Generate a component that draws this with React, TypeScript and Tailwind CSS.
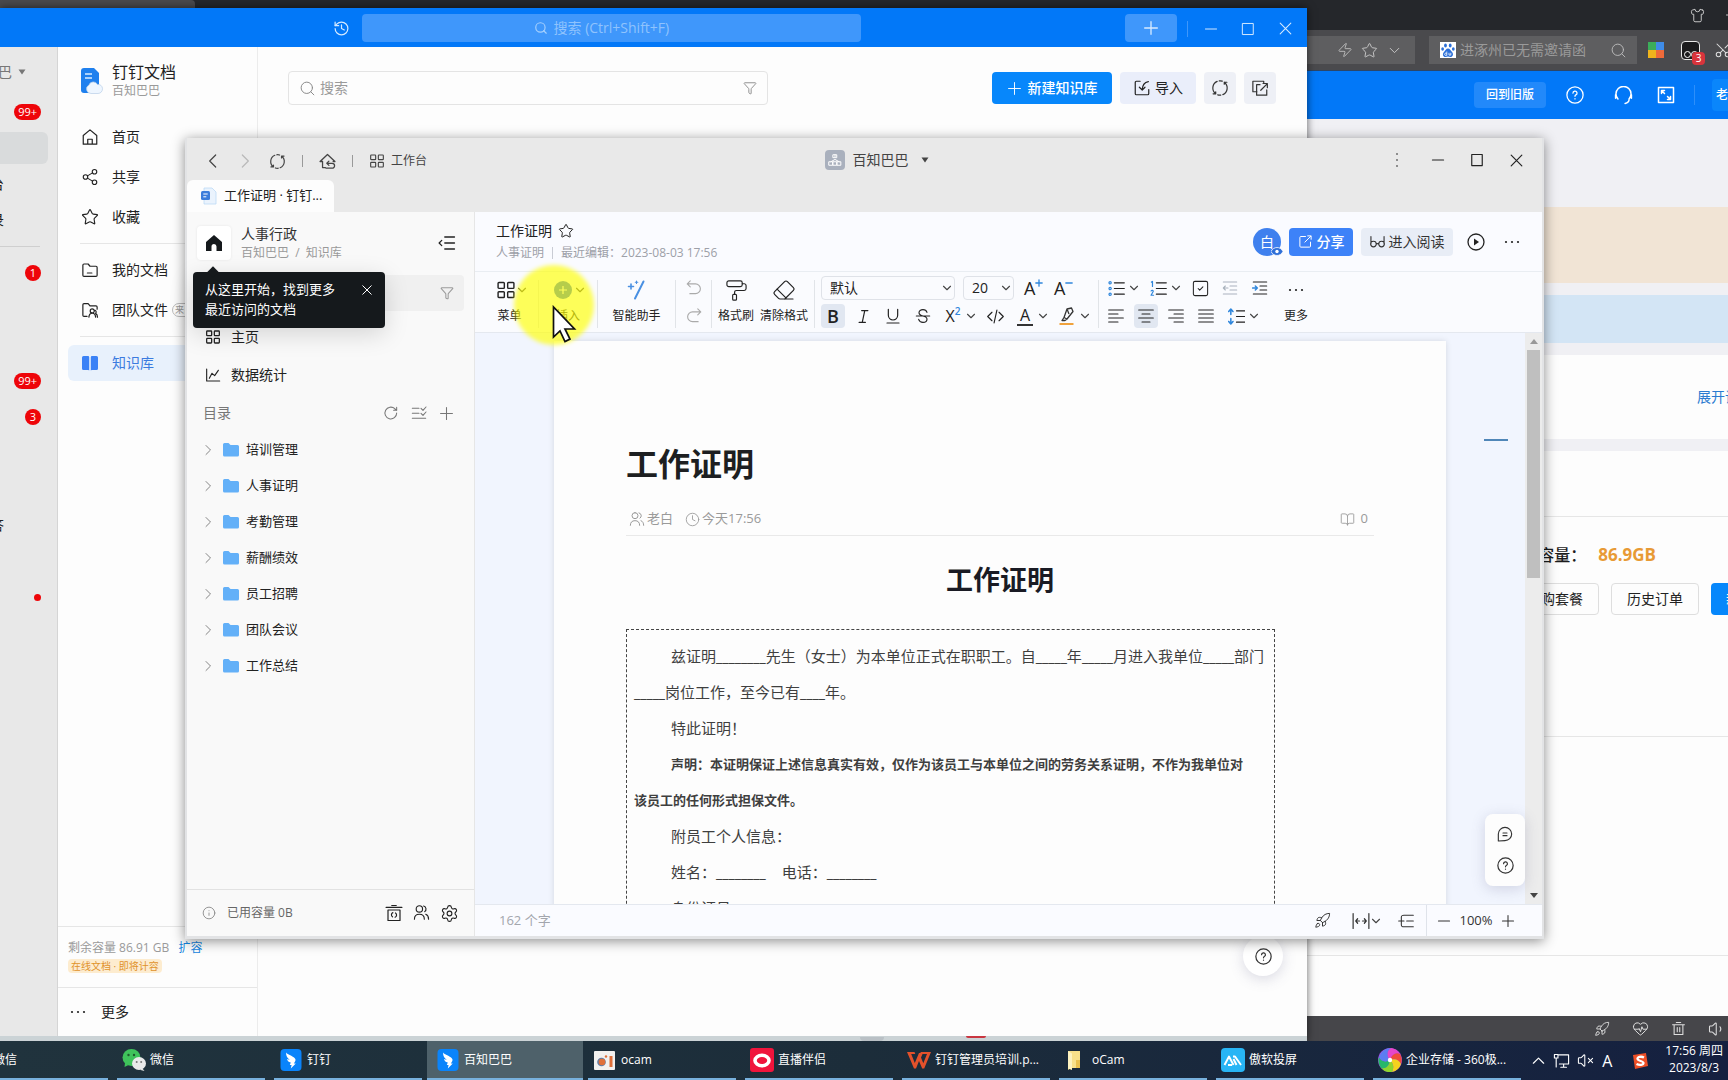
import React from "react";
import {
  Share2, Star, Search, Funnel, ChevronDown, History, Info, Rocket, Scissors, Shirt,
  HeartPulse, Clock, BookOpen, Zap, Settings, SquareCheck, Eraser, PaintRoller, VolumeX, Volume1,
} from "lucide-react";

type IconProps = {
  d: string;
  size?: number;
  w?: number;
  className?: string;
  children?: React.ReactNode;
};

function Icon({ d, size = 18, w = 1.6, className = "", children }: IconProps) {
  return (
    <svg
      width={size}
      height={size}
      viewBox="0 0 24 24"
      fill="none"
      stroke="currentColor"
      strokeWidth={w}
      strokeLinecap="round"
      strokeLinejoin="round"
      className={"shrink-0 " + className}
      aria-hidden="true"
    >
      <path d={d} />
      {children}
    </svg>
  );
}

const P = {
  plus: "M12 2.500v19M2.500 12h19",
  minus: "M2.500 12h19",
  square: "M3 2.500h18v19H3z",
  close: "M3.500 3.500l17 17M20.500 3.500l-17 17",
  left: "M16 3 7 12l9 9",
  right: "M8 3l9 9-9 9",
  up: "M2.500 17 12 7.500l9.500 9.500",
  undo: "M7 2.500 3 6.500l4 4M3 6.500h11a6.500 6.500 0 0 1 0 13H6.500",
  redo: "M17 2.500l4 4-4 4M21 6.500H10a6.500 6.500 0 0 0 0 13h7.500",
  code: "M7 6l-6 6 6 6M17 6l6 6-6 6M14 3l-4 18",
  trash: "M2.500 6h19M8.500 2.500h7M5 6v15.500h14V6M10 10.500v6.500M14 10.500v6.500",
  users: "M9 2.500a4.500 4.500 0 1 1 0 9 4.500 4.500 0 0 1 0-9zM2 21.500c0-4.500 2.500-7 7-7s7 2.500 7 7M15 2.800a4.500 4.500 0 0 1 1.500 8M18 14.500c2.500 1 4 3.500 4 7",
  refresh: "M8.200 3.200A9.600 9.600 0 0 0 6.300 19.700M6.300 19.700H2.800M6.300 19.700v-2.700M15.800 20.800A9.600 9.600 0 0 0 17.700 4.300M17.700 4.300h3.500M17.700 4.300V7M11 2.500c2-.2 3 0 4 .4M13 21.500c-2 .2-3 0-4-.4",
  reload: "M20.500 12a8.800 8.800 0 1 1-2.800-6.400L20.500 8M20.500 3.600V8h-4.600",
  grid: "M3.500 3h5.500a1 1 0 0 1 1 1v5a1 1 0 0 1-1 1H3.500a1 1 0 0 1-1-1V4a1 1 0 0 1 1-1zM15 3h5.500a1 1 0 0 1 1 1v5a1 1 0 0 1-1 1H15a1 1 0 0 1-1-1V4a1 1 0 0 1 1-1zM3.500 14H9a1 1 0 0 1 1 1v5a1 1 0 0 1-1 1H3.500a1 1 0 0 1-1-1v-5a1 1 0 0 1 1-1zM15 14h5.500a1 1 0 0 1 1 1v5a1 1 0 0 1-1 1H15a1 1 0 0 1-1-1v-5a1 1 0 0 1 1-1z",
  homeBack: "M9 20.500H5V12H1.500L12 2 22.500 12H20M11 14.500h7.500a3.500 3.500 0 0 1 0 7H10M11 14.500l3-3M11 14.500l3 3",
  collapse: "M9 4h13M9 12h13M9 20h13M5 8.500 1.500 12 5 15.500",
  question: "M9.300 9.500a2.700 2.700 0 1 1 3.900 2.400c-.8.4-1.200.9-1.200 1.900M12 17v.3",
  folderMinus: "M2.500 19V5.500a1.500 1.500 0 0 1 1.500-1.500h5.500l2.500 3H20a1.500 1.500 0 0 1 1.500 1.500V19a1.500 1.500 0 0 1-1.500 1.500H4A1.500 1.500 0 0 1 2.500 19zM8.500 16h6",
  folderUser: "M8 20.500H4A1.500 1.500 0 0 1 2.500 19V5A1.500 1.500 0 0 1 4 3.500h5.500l2.500 3H20A1.500 1.500 0 0 1 21.500 8v3M15 10.500a2.700 2.700 0 1 1 0 5.400 2.700 2.700 0 0 1 0-5.400zM10.500 21.500c.3-3.500 2-5.200 4.500-5.200s4.200 1.700 4.500 5.200M19 12.500c1.500 1 1.500 3 .5 4 1.500.8 2.500 2.500 2.500 5",
  importIn: "M9.500 3H4.500A1.500 1.500 0 0 0 3 4.500v15A1.500 1.500 0 0 0 4.500 21h15a1.500 1.500 0 0 0 1.500-1.500V14M20.500 3.500C15 4.500 12.500 8 12.300 14.500M8.500 11l3.800 3.700 3.700-3.700",
  copyOut: "M8 17H2.500V3H17V5M12 7.500H7.500V21.500H21v-7M13 15l8.500-8.500M16 6h5.800v5.500",
  share: "M12 4H4.500A1.500 1.500 0 0 0 3 5.500v14A1.500 1.500 0 0 0 4.500 21h14a1.500 1.500 0 0 0 1.500-1.500V13M11 13l9.500-9.500M15.500 3H21v5.500",
  chart: "M2.500 3v18H22M6.500 17l4-7.500 4 3.500 5.500-8",
  listCheck: "M2 5h10M2 12.500h10M2 20h20M15 5l3 3 4.500-5M15 12.500l3 3 4.500-5",
  trashCycle: "M1.500 4.500h21M9 2h6M4 8v14h16V8zM10.500 11.500a3.200 3.200 0 0 0-.5 5.600M13.500 17.600a3.200 3.200 0 0 0 .5-5.600",
  comment: "M2 22.500V12a10 10 0 1 1 10 10zM9 10.500h6M9 14.500h6",
  outline: "M9 3.500h14M13 12h10M9 20.500h14M1 12h8M9 3.500c-3 0-4 0-4 3v11c0 3 1 3 4 3",
  fit: "M1.500 2v20M22.500 2v20M5 12h5M7.500 9 5 12l2.500 3M19 12h-5M16.500 9l2.500 3-2.500 3",
  alignLeft: "M1 3h22M1 9h14M1 15h22M1 21h14",
  alignCenter: "M1 3h22M6 9h12M1 15h22M6 21h12",
  alignRight: "M1 3h22M9 9h14M1 15h22M9 21h14",
  alignJustify: "M1 3h22M1 9h22M1 15h22M1 21h22",
  monitor: "M9 17H22V4H8M2 3.500h5v5H2zM4.500 8.500V21M11 21.500h8M15 17v4",
  headset: "M5 16.500a9.500 9.500 0 1 1 14 0M19 17.500c0 3-2 4-5 4.500M2 11v4.500M22 11v4.500",
};

const FONT = "font-['Open_Sans','Noto_Sans_CJK_SC',sans-serif]";

function Question({ size = 18, className = "" }: { size?: number; className?: string }) {
  return (
    <Icon d={P.question} size={size} w={1.700} className={className}>
      <circle cx="12" cy="12" r="10.800" />
    </Icon>
  );
}

function Dots({ vertical = false }: { vertical?: boolean }) {
  return (
    <svg width="18" height="18" viewBox="0 0 18 18" fill="currentColor" className={"shrink-0 " + (vertical ? "rotate-90" : "")} aria-hidden="true">
      <circle cx="3" cy="9" r="1.100" /><circle cx="9" cy="9" r="1.100" /><circle cx="15" cy="9" r="1.100" />
    </svg>
  );
}

function Caret() {
  return (
    <svg width="8" height="6" viewBox="0 0 8 6" fill="currentColor" className="shrink-0" aria-hidden="true">
      <path d="M.5.500h7L4 5.500z" />
    </svg>
  );
}

/* ---------- Browser window behind everything ---------- */

function Browser() {
  return (
    <section className="absolute inset-0 flex flex-col bg-[#f0f0f4]">
      <div className="flex h-[30px] shrink-0 items-start justify-between bg-[#25272b]">
        <div className="h-2 w-[195px] rounded-tr bg-[#4a4a4d]" />
        <div className="flex h-full items-center gap-5 overflow-hidden text-[#cfcfcf]">
          <button aria-label="皮肤"><Shirt size={15} strokeWidth={1.500} /></button>
          <button aria-label="最小化" className="w-[3px] overflow-hidden"><Icon d={P.minus} size={14} /></button>
        </div>
      </div>
      <div className="flex h-[41px] shrink-0 items-center justify-end border-b border-[#2c4668] bg-[#4a4a4d]">
        <div className="flex h-7 flex-1 items-center justify-end gap-2 bg-[#5e5e60] pr-3 text-[#c4c4c4]">
          <Zap size={16} strokeWidth={1.300} />
          <Star size={17} strokeWidth={1.400} />
          <ChevronDown size={17} strokeWidth={1.400} />
        </div>
        <label className="ml-3.5 flex h-7 w-[208px] items-center bg-[#5e5e60] pl-[11px] pr-2.5">
          <svg width="16" height="16" viewBox="0 0 16 16" className="shrink-0" aria-hidden="true">
            <rect width="16" height="16" fill="#fff" />
            <g fill="#2b6fd8">
              <ellipse cx="5.500" cy="3.500" rx="1.400" ry="2" />
              <ellipse cx="10.200" cy="3.500" rx="1.400" ry="2" />
              <ellipse cx="2.600" cy="7" rx="1.400" ry="1.800" />
              <ellipse cx="13.300" cy="7" rx="1.400" ry="1.800" />
              <path d="M8 6.500c2 0 2.500 2 4 3.500 2 2.200.8 5-1.600 5-1 0-1.600-.4-2.400-.4s-1.500.4-2.500.4C3 15 2 12.200 4 10c1.500-1.500 2-3.500 4-3.500z" />
            </g>
            <path d="M6.800 9.500v4M6.800 11.500a1.200 1.200 0 1 0 0 1.500M9 10.800v2.300h1.800v-2.300" stroke="#fff" strokeWidth=".8" fill="none" />
          </svg>
          <input
            aria-label="网页搜索"
            placeholder="进涿州已无需邀请函"
            className="ml-1 min-w-0 flex-1 bg-transparent text-sm text-[#999] outline-none placeholder:text-[#9a9a9a]"
          />
          <Search size={17} strokeWidth={1.300} className="shrink-0 text-[#bdbdbd]" />
        </label>
        <div className="ml-[11px] grid h-4 w-4 grid-cols-2">
          <i className="bg-[#3cae5a]" /><i className="bg-[#3f8ce8]" />
          <i className="bg-[#f0b41c]" /><i className="bg-[#ee6a3a]" />
        </div>
        <div className="relative ml-[17px] h-[19px] w-[19px] rounded border border-[#e8e8e8] bg-[#1b1b1d]">
          <i className="absolute left-0.5 top-[9px] h-[7px] w-[7px] rounded-full border border-white" />
          <i className="absolute left-[9px] top-[9px] h-[7px] w-[7px] rounded-full border border-white" />
          <span className="absolute -bottom-1.5 -right-1.5 flex h-[13px] w-[13px] items-center justify-center rounded-sm bg-[#d8343c] text-[10px] text-white">3</span>
        </div>
        <button aria-label="截图" className="ml-3.5 w-[14px] overflow-hidden text-[#dcdcdc]">
          <Scissors size={18} strokeWidth={1.400} className="-rotate-90" />
        </button>
      </div>
      <div className="flex h-12 shrink-0 items-center justify-end bg-[#0278f8] text-white">
        <button className="h-[26px] w-[72px] rounded bg-[#2289fa] text-xs font-medium">回到旧版</button>
        <Question size={18} className="ml-5" />
        <Icon d={P.headset} size={19} w={1.900} className="ml-[30px]" />
        <Icon d="M2 2h20v20H2zM6 10V6h4M6 6l4 4M18 14v4h-4M18 18l-4-4" size={18} w={2} className="ml-6" />
        <span className="ml-[19px] h-5 w-px bg-[#2d8ffa]" />
        <span className="ml-[17px] flex h-8 w-4 items-center overflow-hidden rounded-l bg-[#0a86fb] pl-1 text-xs font-medium">老</span>
      </div>
      <div className="mt-[88px] h-[76px] shrink-0 bg-[#f1e4d5]" />
      <div className="mt-3 h-12 shrink-0 bg-[#d3e5f5]" />
      <div className="mt-3 flex h-[84px] shrink-0 items-center justify-end bg-[#fdfdfd]">
        <a href="#expand" className="w-[31px] overflow-hidden whitespace-nowrap text-sm text-[#2b7bd0]">展开说</a>
      </div>
      <div className="mt-3 flex flex-1 flex-col bg-[#fdfdfd]">
        <div className="h-[66px] border-b border-[#e6e6e6]" />
        <div className="flex h-[220px] flex-col items-end border-b border-[#e6e6e6] pt-[26px]">
          <p className="flex h-6 items-center pr-[72px] text-base font-medium text-[#1c1c1c]">
            剩余容量：<b className="ml-3 text-[17px] text-[#e89a35]">86.9GB</b>
          </p>
          <div className="mt-4 flex gap-3 text-sm text-[#222]">
            <button className="h-8 w-[88px] rounded border border-[#dedede]">选购套餐</button>
            <button className="h-8 w-[88px] rounded border border-[#dedede]">历史订单</button>
            <button className="h-8 w-[17px] overflow-hidden rounded-l bg-[#0787fb] pl-[15px] text-white">新</button>
          </div>
        </div>
        <div className="h-[219px] border-b border-[#e6e6e6]" />
      </div>
      <div className="flex h-[25px] shrink-0 items-center justify-end gap-[22px] bg-[#46464a] pr-0.5 text-[#dedede]">
        <Rocket size={16} strokeWidth={1.400} />
        <HeartPulse size={17} strokeWidth={1.400} />
        <Icon d={P.trash} size={15} w={1.700} />
        <Volume1 size={18} strokeWidth={1.400} />
      </div>
    </section>
  );
}

/* ---------- DingTalk main window ---------- */

function Badge({ children }: { children: React.ReactNode }) {
  return (
    <span className="ml-auto mr-4 flex h-4 min-w-4 items-center justify-center rounded-full bg-[#ee0509] px-1 text-[11px] text-white">
      {children}
    </span>
  );
}

function RailText({ children }: { children: string }) {
  return (
    <span className="flex w-1 justify-end overflow-hidden whitespace-nowrap text-sm text-[#222]">
      <span>{children}</span>
    </span>
  );
}

function Rail() {
  const row = "flex h-9 shrink-0 items-center";
  return (
    <nav className="flex w-[58px] shrink-0 flex-col overflow-hidden border-r border-[#d5d5d5] bg-[#e8e8e8]">
      <div className="flex h-[49px] shrink-0 items-center text-sm text-[#777]">
        <span className="flex w-3 justify-end overflow-hidden whitespace-nowrap"><span>巴</span></span>
        <span className="ml-1.5"><Caret /></span>
      </div>
      <div className="-mt-0.5 flex h-9 shrink-0 items-center"><Badge>99+</Badge></div>
      <div className={row}><div className="h-8 w-12 rounded-r-md bg-[#d9dbdc]" /></div>
      <div className={row}><RailText>台</RailText></div>
      <div className={row}><RailText>录</RailText></div>
      <div className="flex h-[17px] shrink-0 items-center"><i className="h-px w-10 bg-[#cfcfcf]" /></div>
      <div className={row}><Badge>1</Badge></div>
      <div className={row} />
      <div className={row} />
      <div className={row}><Badge>99+</Badge></div>
      <div className={row}><Badge>3</Badge></div>
      <div className={row} />
      <div className={row} />
      <div className={row}><RailText>答</RailText></div>
      <div className={row} />
      <div className={row}><i className="ml-auto mr-4 h-[7px] w-[7px] rounded-full bg-[#ee0509]" /></div>
    </nav>
  );
}

function DocsItem({ icon, label, tag }: { icon: React.ReactNode; label: string; tag?: string }) {
  return (
    <a href="#nav" className="flex h-10 shrink-0 items-center pl-[23px] text-sm text-[#222]">
      {icon}
      <span className="ml-[13px]">{label}</span>
      {tag && <span className="ml-1 rounded-full border border-[#bbb] px-0.5 text-[9px] leading-3 text-[#999]">{tag}</span>}
    </a>
  );
}

function DocsSidebar() {
  return (
    <aside className="flex w-[200px] shrink-0 flex-col overflow-hidden border-r border-[#ececec]">
      <div className="flex h-[68px] shrink-0 items-center pl-[22px]">
        <svg width="24" height="28" viewBox="0 0 24 28" aria-hidden="true">
          <path d="M1 4a3 3 0 0 1 3-3h10l5 5v17a3 3 0 0 1-3 3H4a3 3 0 0 1-3-3z" fill="#1f80ee" />
          <path d="M5 7h7M5 11h7" stroke="#d9ecff" strokeWidth="1.600" />
          <path d="M11 26.500a4.500 4.500 0 0 1-2-8.500 4.600 4.600 0 0 1 8.500-.5c2.500-.5 5 1.500 5 4.200 0 2.700-2 4.800-4.500 4.800z" fill="#eef6ff" stroke="#b9cfe6" strokeWidth=".7" />
        </svg>
        <div className="ml-2">
          <h1 className="text-base leading-5 text-[#222]">钉钉文档</h1>
          <p className="text-xs leading-[18px] text-[#9a9a9a]">百知巴巴</p>
        </div>
      </div>
      <div className="mt-0.5 flex flex-col">
        <DocsItem icon={<Icon d="M3 10 12 2.500l9 7.500V21.500H3zM9 21.500V15h6v6.500" />} label="首页" />
        <DocsItem icon={<Share2 size={18} strokeWidth={1.500} />} label="共享" />
        <DocsItem icon={<Star size={18} strokeWidth={1.500} />} label="收藏" />
      </div>
      <div className="flex h-[13px] shrink-0 items-center pl-[22px]"><i className="h-px flex-1 bg-[#e6e6e6]" /></div>
      <DocsItem icon={<Icon d={P.folderMinus} />} label="我的文档" />
      <DocsItem icon={<Icon d={P.folderUser} />} label="团队文件" tag="来自" />
      <div className="flex h-[13px] shrink-0 items-center pl-[22px]"><i className="h-px flex-1 bg-[#e6e6e6]" /></div>
      <a href="#kb" className="ml-2.5 mt-0.5 flex h-9 shrink-0 items-center rounded-md bg-[#e8f1fc] pl-[13px] text-sm text-[#3b7be0]">
        <svg width="18" height="18" viewBox="0 0 18 18" fill="#3b82f6" aria-hidden="true">
          <path d="M1 3.500A1.500 1.500 0 0 1 2.500 2H7a1.200 1.200 0 0 1 1.200 1.200V16.500L7.300 16H2.500A1.500 1.500 0 0 1 1 14.500zM11 2h4.500A1.500 1.500 0 0 1 17 3.500v11a1.500 1.500 0 0 1-1.500 1.500h-4.800l-.9.500V3.200A1.200 1.200 0 0 1 11 2z" />
        </svg>
        <span className="ml-[13px]">知识库</span>
      </a>
      <div className="mt-auto h-[61px] shrink-0 border-t border-[#e6e6e6] pl-2.5 pt-3 text-xs leading-[18px] text-[#9a9a9a]">
        <p>剩余容量 86.91 GB <a href="#more" className="ml-1.5 text-[#1785e0]">扩容</a></p>
        <p><span className="rounded-sm bg-[#fdeccf] px-[3px] text-[10px] text-[#e0922a]">在线文档 · 即将计容</span></p>
      </div>
      <button className="flex h-[49px] shrink-0 items-center border-t border-[#e6e6e6] pl-[11px] text-sm text-[#222]">
        <Dots />
        <span className="ml-3.5">更多</span>
      </button>
    </aside>
  );
}

function DingTalk() {
  return (
    <section className="absolute bottom-0 left-0 right-[421px] top-2 flex flex-col border-b-[5px] border-[#cbd3d6] bg-[#fdfdfd] shadow-[0_0_8px_rgba(0,0,0,0.6)]">
      <header className="flex h-[39px] shrink-0 items-center bg-[#0278f8] pl-[333px] pr-3.5 pt-0.5 text-[#d6eaff]">
        <History size={17} strokeWidth={1.700} />
        <label className="mb-0.5 ml-3 flex h-7 w-[499px] items-center justify-center gap-1.5 rounded bg-[#3f97fb] text-[#a6d0fd]">
          <Search size={14} strokeWidth={2} />
          <input
            aria-label="全局搜索"
            placeholder="搜索 (Ctrl+Shift+F)"
            className="w-[136px] bg-transparent text-sm outline-none placeholder:text-[#8fc3fd]"
          />
        </label>
        <button aria-label="新建" className="mb-0.5 ml-auto flex h-7 w-[52px] items-center justify-center rounded bg-[#3f97fb]"><Icon d={P.plus} size={16} w={2} /></button>
        <i className="ml-2.5 h-4 w-px bg-[#3f97fb]" />
        <div className="ml-4 flex gap-[23px]">
          <button aria-label="最小化"><Icon d={P.minus} size={14} w={1.700} /></button>
          <button aria-label="最大化"><Icon d={P.square} size={14} w={1.700} /></button>
          <button aria-label="关闭"><Icon d={P.close} size={15} w={1.700} /></button>
        </div>
      </header>
      <div className="flex min-h-0 flex-1">
        <Rail />
        <DocsSidebar />
        <main className="flex min-w-0 flex-1 flex-col">
          <div className="flex items-center gap-2 pl-[30px] pr-[31px] pt-6">
            <label className="flex h-[34px] w-[480px] items-center rounded border border-[#e4e4e4] px-2.5 text-[#8b8b8b]">
              <Search size={17} strokeWidth={1.400} />
              <input aria-label="搜索知识库" placeholder="搜索" className="ml-1 min-w-0 flex-1 bg-transparent text-sm outline-none placeholder:text-[#9a9a9a]" />
              <Funnel size={14} strokeWidth={1.600} />
            </label>
            <button className="ml-auto flex h-8 w-[120px] items-center justify-center gap-1.5 rounded bg-[#0787fb] text-sm font-medium text-white">
              <Icon d={P.plus} size={15} w={1.500} />新建知识库
            </button>
            <button className="flex h-8 w-[76px] items-center justify-center gap-1 rounded bg-[#eaeefa] text-sm text-[#222]">
              <Icon d={P.importIn} size={18} />导入
            </button>
            <button aria-label="刷新" className="flex h-8 w-8 items-center justify-center rounded bg-[#eef0f6] text-[#333]"><Icon d={P.refresh} size={18} /></button>
            <button aria-label="新窗口打开" className="flex h-8 w-8 items-center justify-center rounded bg-[#eef0f6] text-[#333]"><Icon d={P.copyOut} size={18} /></button>
          </div>
          <div className="mb-[60px] mt-auto flex justify-end pr-6">
            <button aria-label="帮助" className="flex h-10 w-10 items-center justify-center rounded-full bg-white text-[#333] shadow-[0_3px_14px_rgba(90,90,130,0.22)]">
              <Question size={17} />
            </button>
          </div>
        </main>
      </div>
      <i className="absolute -bottom-[5px] left-[860px] h-1 w-6 rounded-b bg-[#b9c0c5]" />
      <i className="absolute -bottom-0.5 left-[966px] h-0.5 w-5 rounded-b bg-[#c93640]" />
    </section>
  );
}

/* ---------- Document window ---------- */

function Folder() {
  return (
    <svg width="18" height="16" viewBox="0 0 18 16" className="ml-[5px] shrink-0" aria-hidden="true">
      <path d="M1 2.500A1.500 1.500 0 0 1 2.500 1h4l2 2h7A1.500 1.500 0 0 1 17 4.500v8.500a1.500 1.500 0 0 1-1.500 1.500h-13A1.500 1.500 0 0 1 1 13z" fill="#63b0f8" />
    </svg>
  );
}

const FOLDERS = ["培训管理", "人事证明", "考勤管理", "薪酬绩效", "员工招聘", "团队会议", "工作总结"];

function DocSidebar() {
  return (
    <aside className="flex w-[288px] shrink-0 flex-col border-r border-[#e6e6e6] bg-[#f9f9f9] text-[#222]">
      <div className="mt-3.5 flex h-[34px] shrink-0 items-center pl-2.5 pr-[18px]">
        <button aria-label="主页" className="flex h-[34px] w-[34px] items-center justify-center rounded bg-white shadow-[0_0_3px_rgba(0,0,0,0.08)]">
          <svg width="18" height="18" viewBox="0 0 18 18" aria-hidden="true">
            <path d="M9 1 1 8v9h5.500v-4.500a2.500 2.500 0 0 1 5 0V17H17V8z" fill="#15191c" />
          </svg>
        </button>
        <div className="ml-2.5">
          <h2 className="text-sm leading-5 text-[#333]">人事行政</h2>
          <p className="text-xs leading-[18px] text-[#999]">百知巴巴&nbsp; /&nbsp; 知识库</p>
        </div>
        <button aria-label="收起" className="ml-auto"><Icon d={P.collapse} size={18} w={1.700} /></button>
      </div>
      <div className="mx-2.5 mt-[15px] flex h-9 shrink-0 items-center justify-end rounded bg-[#f0f0f0] pr-2.5 text-[#9b9b9b]">
        <Funnel size={14} strokeWidth={1.800} />
      </div>
      <a href="#home" className="mt-[7px] flex h-[38px] shrink-0 items-center pl-[18px] text-sm"><Icon d={P.grid} size={16} w={1.900} /><span className="ml-2.5">主页</span></a>
      <a href="#stat" className="flex h-[38px] shrink-0 items-center pl-[18px] text-sm"><Icon d={P.chart} size={16} w={1.700} /><span className="ml-2.5">数据统计</span></a>
      <div className="flex h-[38px] shrink-0 items-center gap-3 pl-4 pr-5 text-sm text-[#777]">
        <span className="mr-auto">目录</span>
        <Icon d={P.reload} size={16} />
        <Icon d={P.listCheck} size={16} />
        <Icon d={P.plus} size={15} w={1.700} />
      </div>
      {FOLDERS.map((name) => (
        <a href="#folder" key={name} className="flex h-9 shrink-0 items-center pl-[15px] text-[13px]">
          <Icon d={P.right} size={12} w={1.800} className="mr-[3px] text-[#777]" />
          <Folder />
          <span className="ml-1.5">{name}</span>
        </a>
      ))}
      <div className="mt-auto flex h-[47px] shrink-0 items-center border-t border-[#e2e2e2] pl-[15px] pr-[15px] text-xs text-[#666]">
        <Info size={14} strokeWidth={1.500} className="text-[#888]" />
        <span className="ml-[11px] mr-auto">已用容量 0B</span>
        <div className="flex gap-2.5 text-[#222]">
          <Icon d={P.trashCycle} size={18} />
          <Icon d={P.users} size={17} />
          <Settings size={19} strokeWidth={1.400} />
        </div>
      </div>
    </aside>
  );
}

function Sep() {
  return <i className="my-1 w-px shrink-0 self-stretch bg-[#e1e4e8]" />;
}

function Tool({ label, children, on = false }: { label: string; children: React.ReactNode; on?: boolean }) {
  return (
    <button aria-label={label} className={"flex h-6 w-6 shrink-0 items-center justify-center rounded-sm " + (on ? "bg-[#e1e7f1]" : "")}>
      {children}
    </button>
  );
}

function Chev() {
  return <Icon d="M5 8.500l7 7 7-7" size={12} w={2.200} className="text-[#444]" />;
}

function BigTool({ label, width, children }: { label: string; width: string; children: React.ReactNode }) {
  return (
    <button className={"flex shrink-0 flex-col items-center gap-1 text-xs " + width}>
      <span className="flex h-6 items-center pt-1">{children}</span>
      <span className="flex h-6 items-center whitespace-nowrap">{label}</span>
    </button>
  );
}

function Toolbar() {
  return (
    <div className="flex h-[61px] shrink-0 border-b border-[#e4e8ef] bg-[#fafbfe] pt-1 text-[#222]">
      <BigTool label="菜单" width="w-[63px] pl-1.5">
        <span className="flex items-center pl-1"><Icon d={P.grid} size={20} w={1.700} /><Chev /></span>
      </BigTool>
      <Sep />
      <BigTool label="插入" width="w-[58px]">
        <span className="flex items-center gap-0.5 pl-1">
          <svg width="18" height="18" viewBox="0 0 18 18" aria-hidden="true"><circle cx="9" cy="9" r="9" fill="#2f6fd8" /><path d="M9 5v8M5 9h8" stroke="#fff" strokeWidth="1.200" /></svg>
          <Chev />
        </span>
      </BigTool>
      <Sep />
      <BigTool label="智能助手" width="w-[77px]">
        <svg width="20" height="20" viewBox="0 0 20 20" fill="none" stroke="#4a90e2" strokeLinecap="round" aria-hidden="true">
          <path d="M16.500 1.500 8 18.500" strokeWidth="2" />
          <path d="M4 4v5M1.500 6.500h5" strokeWidth="1.600" />
          <path d="M9.500 1v2.500M8.300 2.200h2.500" strokeWidth="1.100" />
        </svg>
      </BigTool>
      <Sep />
      <div className="flex w-[35px] shrink-0 flex-col items-center gap-1 text-[#aaa]">
        <Tool label="撤销"><Icon d={P.undo} size={18} w={1.500} /></Tool>
        <Tool label="重做"><Icon d={P.redo} size={18} w={1.500} /></Tool>
      </div>
      <Sep />
      <div className="flex gap-1.5 px-1.5">
        <BigTool label="格式刷" width="w-9"><PaintRoller size={23} strokeWidth={1.200} /></BigTool>
        <BigTool label="清除格式" width="w-12"><Eraser size={24} strokeWidth={1.200} /></BigTool>
      </div>
      <Sep />
      <div className="flex w-[283px] shrink-0 flex-col gap-1 pl-1.5">
        <div className="flex h-6 items-center">
          <span className="relative flex">
            <select aria-label="字体" className="h-6 w-[134px] appearance-none rounded-sm border border-[#dfe2e8] bg-transparent pl-2 text-sm"><option>默认</option></select>
            <span className="pointer-events-none absolute right-0.5 top-1.5"><Chev /></span>
          </span>
          <span className="relative ml-2 flex">
            <select aria-label="字号" className="h-6 w-[51px] appearance-none rounded-sm border border-[#dfe2e8] bg-transparent pl-2 text-sm"><option>20</option></select>
            <span className="pointer-events-none absolute right-0.5 top-1.5"><Chev /></span>
          </span>
          <button aria-label="增大字号" className="ml-2.5 flex w-6 text-lg leading-6">A<Icon d={P.plus} size={8} w={4} className="mt-[3px] text-[#3087dc]" /></button>
          <button aria-label="减小字号" className="ml-1.5 flex w-6 text-lg leading-6">A<Icon d={P.minus} size={8} w={4} className="mt-[3px] text-[#3087dc]" /></button>
        </div>
        <div className="flex h-6 items-center gap-1.5 text-lg">
          <Tool label="加粗" on><span className="font-semibold leading-6">B</span></Tool>
          <Tool label="斜体"><Icon d="M9 2.500h10M5 21.500h10M14 2.500l-4 19" size={15} w={1.900} /></Tool>
          <Tool label="下划线"><Icon d="M5 2v9a7 7 0 0 0 14 0V2M3 22.500h18" size={16} w={1.800} /></Tool>
          <Tool label="删除线"><Icon d="M18 6.500C17 3.500 15 2.500 12 2.500c-3.500 0-6 1.800-6 4.700 0 2.300 1.500 3.700 6 4.800M2 12h20M12 12c4.500 1 6 2.500 6 4.800 0 3-2.500 4.700-6 4.700-3.300 0-5.500-1.300-6.500-4.500" size={16} w={1.700} /></Tool>
          <span className="flex items-center"><Tool label="上标"><span className="text-base leading-6">X</span><sup className="text-[10px] font-semibold text-[#3087dc]">2</sup></Tool><Chev /></span>
          <Tool label="代码"><Icon d={P.code} size={17} /></Tool>
          <span className="flex items-center"><Tool label="文字颜色"><span className="w-4 border-b-2 border-[#333] text-center text-base leading-[17px]">A</span></Tool><Chev /></span>
          <span className="flex items-center">
            <Tool label="高亮">
              <svg width="18" height="20" viewBox="0 0 18 20" fill="none" aria-hidden="true">
                <path d="M6 11.500 9 3l4.500-1 1.500 3.500-6 7.500zM6 11.500 4 14.500h3l2-1.500M9 3l2 5" stroke="#333" strokeWidth="1.300" strokeLinejoin="round" />
                <path d="M1.500 18h14" stroke="#f0a23c" strokeWidth="2" />
              </svg>
            </Tool>
            <Chev />
          </span>
        </div>
      </div>
      <Sep />
      <div className="flex flex-col gap-1 pl-[5px]">
        <div className="flex h-6 items-center gap-1.5">
          <span className="flex items-center">
            <Tool label="无序列表">
              <Icon d="M9 4h14M9 12h14M9 20h14" size={17} w={1.700}><g stroke="#3087dc"><circle cx="3" cy="4" r="1.600" /><circle cx="3" cy="12" r="1.600" /><circle cx="3" cy="20" r="1.600" /></g></Icon>
            </Tool><Chev />
          </span>
          <span className="flex items-center">
            <Tool label="有序列表">
              <Icon d="M9 4h14M9 12h14M9 20h14" size={17} w={1.700}><path d="M2 3l1.500-1v7M1.500 15.500c1-1.500 3.500-1 3 .8L1.500 21.500h3.500" stroke="#3087dc" /></Icon>
            </Tool><Chev />
          </span>
          <Tool label="待办"><SquareCheck size={19} strokeWidth={1.300} /></Tool>
          <Tool label="减少缩进"><span className="text-[#a9b2bd]"><Icon d="M2 3h20M12 9h10M12 15h10M2 21h20M9 12H2M5 9l-3 3 3 3" size={16} w={1.700} /></span></Tool>
          <Tool label="增加缩进">
            <Icon d="M2 3h20M12 9h10M12 15h10M2 21h20" size={16} w={1.700}><path d="M1 12h7M5 9l3 3-3 3" stroke="#3087dc" strokeWidth="2.200" /></Icon>
          </Tool>
        </div>
        <div className="flex h-6 items-center gap-1.5">
          <Tool label="左对齐"><Icon d={P.alignLeft} size={16} w={1.600} /></Tool>
          <Tool label="居中" on><Icon d={P.alignCenter} size={16} w={1.600} /></Tool>
          <Tool label="右对齐"><Icon d={P.alignRight} size={16} w={1.600} /></Tool>
          <Tool label="两端对齐"><Icon d={P.alignJustify} size={16} w={1.600} /></Tool>
          <span className="flex items-center">
            <Tool label="行高">
              <Icon d="M12 4h12M12 12h12M12 20h12" size={17} w={1.700}><path d="M4 2v7M1 5l3-3.500L7 5M4 22v-7M1 19l3 3.500L7 19" stroke="#3087dc" strokeWidth="2.200" /></Icon>
            </Tool><Chev />
          </span>
        </div>
      </div>
      <BigTool label="更多" width="w-12"><Dots /></BigTool>
    </div>
  );
}

function Blank({ n }: { n: number }) {
  return <span className="font-['Noto_Sans',sans-serif] text-sm">{"_".repeat(n)}</span>;
}

function Page() {
  return (
    <article className="min-h-full bg-[#fdfdfd] px-[72px] pt-[99px] shadow-[0_0_6px_rgba(0,0,0,0.12)]">
      <h1 className="text-[32px] font-bold leading-[48px] text-[#1d1f21]">工作证明</h1>
      <div className="mt-[15px] flex h-[33px] items-center border-b border-[#e9e9e9] pl-[3px] text-[13px] text-[#9a9a9a]">
        <Icon d={P.users} size={16} w={1.500} /><span className="ml-0.5">老白</span>
        <Clock size={15} strokeWidth={1.400} className="ml-3" /><span className="ml-0.5">今天17:56</span>
        <BookOpen size={15} strokeWidth={1.400} className="ml-auto" /><span className="ml-1.5 mr-1.5">0</span>
      </div>
      <h2 className="mt-6 text-center text-[27px] font-bold leading-10 text-[#1a1b24]">工作证明</h2>
      <div className="mt-[29px] w-[649px] whitespace-nowrap border border-dashed border-[#444] pb-3 pl-[7px] pt-2 text-[15px] leading-9 text-[#3f3f3f]">
        <p className="pl-[37px]">兹证明<Blank n={8} />先生（女士）为本单位正式在职职工。自<Blank n={5} />年<Blank n={5} />月进入我单位<Blank n={5} />部门</p>
        <p><Blank n={5} />岗位工作，至今已有<Blank n={4} />年。</p>
        <p className="pl-[37px]">特此证明！</p>
        <p className="pl-[37px] text-[13px] font-bold leading-9">声明：本证明保证上述信息真实有效，仅作为该员工与本单位之间的劳务关系证明，不作为我单位对</p>
        <p className="text-[13px] font-bold leading-9">该员工的任何形式担保文件。</p>
        <p className="pl-[37px]">附员工个人信息：</p>
        <p className="pl-[37px]">姓名：<Blank n={8} /><span className="ml-4">电话：</span><Blank n={8} /></p>
        <p className="pl-[37px]">身份证号</p>
      </div>
    </article>
  );
}

function DocWindow() {
  return (
    <section className="absolute bottom-[102px] left-[185px] right-[184px] top-[138px] flex flex-col border-x-2 border-b-[3px] border-[#e2e3e5] bg-[#e9e9e9] shadow-[0_2px_12px_rgba(0,0,0,0.45)]">
      <header className="shrink-0">
        <div className="flex h-[42px] items-center px-[18px] pt-0.5 text-sm text-[#444]">
          <div className="flex flex-1 items-center gap-4 pt-0.5">
            <button aria-label="后退"><Icon d={P.left} size={16} w={1.800} /></button>
            <button aria-label="前进" className="text-[#b9b9b9]"><Icon d={P.right} size={16} w={1.800} /></button>
            <button aria-label="刷新"><Icon d={P.refresh} size={17} w={1.700} /></button>
            <i className="h-3 w-px bg-[#999]" />
            <button aria-label="返回首页"><Icon d={P.homeBack} size={17} w={1.800} /></button>
            <i className="h-3 w-px bg-[#999]" />
            <button className="flex items-center gap-1.5 text-xs"><Icon d={P.grid} size={16} w={1.700} />工作台</button>
          </div>
          <button className="flex items-center gap-2 pl-6">
            <span className="flex h-5 w-5 items-center justify-center rounded bg-[#a9b0bd] text-white">
              <Icon d="M12 3v4M9 3h6v5H9zM5 15l7-4 7 4M2 15h6v6H2zM9 15h6v6H9zM16 15h6v6h-6z" size={14} w={1.700} />
            </span>
            百知巴巴
            <span className="ml-1"><Caret /></span>
          </button>
          <div className="flex flex-1 items-center justify-end gap-[25px] text-[#222]">
            <button aria-label="更多" className="text-[#777]"><Dots vertical /></button>
            <button aria-label="最小化"><Icon d={P.minus} size={14} w={2} /></button>
            <button aria-label="最大化"><Icon d={P.square} size={14} w={2} /></button>
            <button aria-label="关闭"><Icon d={P.close} size={15} w={1.900} /></button>
          </div>
        </div>
        <div className="flex h-8 w-[147px] items-center rounded-t-md bg-[#fdfdfd] pl-3.5 text-[13px] text-[#222]">
          <svg width="16" height="18" viewBox="0 0 16 18" aria-hidden="true">
            <path d="M3 1h8l4 4v12H3z" fill="#eaf3fd" stroke="#bcd9f5" strokeWidth=".8" />
            <rect x="0" y="4" width="9" height="9" rx="1.500" fill="#3c7ddb" />
            <path d="M2.300 7h4.400M2.300 9.800h3" stroke="#fff" strokeWidth="1" />
          </svg>
          <span className="ml-[7px] whitespace-nowrap">工作证明 · 钉钉...</span>
        </div>
      </header>
      <div className="flex min-h-0 flex-1">
        <DocSidebar />
        <div className="flex min-w-0 flex-1 flex-col">
          <header className="flex h-[60px] shrink-0 items-center border-b border-[#e9edf2] bg-[#fafbff] pl-[21px] pr-[21px]">
            <div>
              <p className="flex items-center gap-1.5 text-sm leading-[22px] text-[#222]">工作证明<Star size={16} strokeWidth={1.500} /></p>
              <p className="flex items-center text-xs leading-[22px] text-[#9da0a8]">人事证明<i className="mx-2 h-3 w-px bg-[#c9ccd4]" />最近编辑：2023-08-03 17:56</p>
            </div>
            <span className="relative ml-auto flex h-7 w-7 items-center justify-center rounded-full bg-[#3f80ee] text-sm text-white">
              白
              <svg width="12" height="9" viewBox="0 0 12 9" className="absolute -right-0.5 bottom-0" aria-hidden="true">
                <path d="M0 4.500C2.500-.8 9.500-.8 12 4.500 9.500 9.800 2.500 9.800 0 4.500z" fill="#2f6fd8" stroke="#fff" strokeWidth=".8" /><circle cx="6" cy="4.500" r="1.700" fill="#fff" />
              </svg>
            </span>
            <button className="ml-2 flex h-7 w-16 items-center justify-center gap-1 rounded bg-[#3d82f8] text-sm font-medium text-white"><Icon d={P.share} size={15} />分享</button>
            <button className="ml-2 flex h-7 w-[92px] items-center justify-center gap-1 rounded bg-[#e8edf6] text-sm text-[#333]">
              <Icon d="M1.500 4v12M22.500 4v12M10 16a3.500 3.500 0 0 1 4 0M5.500 11.500a4.500 4.500 0 1 1 0 9 4.500 4.500 0 0 1 0-9zM18.500 11.500a4.500 4.500 0 1 1 0 9 4.500 4.500 0 0 1 0-9z" size={15} w={1.800} />进入阅读
            </button>
            <button aria-label="演示" className="ml-3.5 text-[#222]">
              <svg width="18" height="18" viewBox="0 0 18 18" aria-hidden="true"><circle cx="9" cy="9" r="8" fill="none" stroke="currentColor" strokeWidth="1.300" /><path d="M7 5.500 12 9l-5 3.500z" fill="currentColor" /></svg>
            </button>
            <button aria-label="更多操作" className="ml-[18px] text-[#222]"><Dots /></button>
          </header>
          <Toolbar />
          <div className="relative flex min-h-0 flex-1 bg-[#f1f5fe]">
            <div className="min-w-0 flex-1 overflow-hidden px-[79px] pt-2"><Page /></div>
            <div className="flex w-[17px] shrink-0 flex-col items-center bg-[#ececec] text-[#555]">
              <span className="flex h-[17px] items-center"><svg width="8" height="5" viewBox="0 0 8 5" fill="#999" aria-hidden="true"><path d="M0 5 4 0l4 5z" /></svg></span>
              <span className="h-[228px] w-[13px] bg-[#bfbfbf]" />
              <span className="mt-auto flex h-[17px] items-center"><svg width="8" height="5" viewBox="0 0 8 5" fill="#444" aria-hidden="true"><path d="M0 0h8L4 5z" /></svg></span>
            </div>
            <i className="absolute right-[34px] top-[106px] h-0.5 w-6 bg-[#4f86b8]" />
            <div className="absolute bottom-[18px] right-[17px] flex h-[72px] w-10 flex-col items-center justify-around rounded-lg bg-[#fdfdfd] py-1 text-[#333] shadow-[0_3px_14px_rgba(90,90,130,0.22)]">
              <button aria-label="评论"><Icon d={P.comment} size={16} w={1.700} /></button>
              <button aria-label="帮助"><Question size={17} /></button>
            </div>
          </div>
          <footer className="flex h-8 shrink-0 items-center border-t border-[#e4e8ef] bg-[#fafbff] pl-6 text-[13px] text-[#333]">
            <span className="mr-auto text-[#a3a6ad]">162 个字</span>
            <Rocket size={17} strokeWidth={1.400} />
            <Icon d={P.fit} size={18} className="ml-[21px]" /><Chev />
            <Icon d={P.outline} size={16} className="ml-4" />
            <i className="ml-3 h-full w-px bg-[#dfe3ea]" />
            <button aria-label="缩小" className="ml-2.5"><Icon d={P.minus} size={14} w={1.800} /></button>
            <span className="w-[50px] text-center">100%</span>
            <button aria-label="放大" className="mr-[27px]"><Icon d={P.plus} size={14} w={1.800} /></button>
          </footer>
        </div>
      </div>
      <div role="tooltip" className="absolute left-1.5 top-[134px] flex h-14 w-48 items-center rounded bg-[#15191c] pb-[3px] pl-3 text-[13px] leading-5 text-white shadow-[0_6px_24px_rgba(0,0,0,0.15)]">
        <i className="absolute -top-1 left-4 h-2 w-2 rotate-45 bg-[#15191c]" />
        <p>从这里开始，找到更多<br />最近访问的文档</p>
        <button aria-label="关闭提示" className="absolute right-3 top-3"><Icon d={P.close} size={12} w={2} /></button>
      </div>
      <i className="absolute left-[327px] top-[127px] h-20 w-20 rounded-full bg-[#ffff00]/65 blur-[2px]" />
      <svg width="25" height="38" viewBox="0 0 25 38" className="absolute left-[365px] top-[167px]" aria-hidden="true">
        <path d="M1.500 2v30l6.500-6 5 10.500 5-2.500-5-10h9.500z" fill="#fff" stroke="#111" strokeWidth="1.700" />
      </svg>
    </section>
  );
}

/* ---------- Taskbar ---------- */

function TaskItem({ icon, label, active = false }: { icon: React.ReactNode; label: string; active?: boolean }) {
  return (
    <button
      className={
        "flex h-full shrink items-center gap-1 overflow-hidden whitespace-nowrap border-b-2 border-[#78b1dd] text-xs text-white " +
        (active ? "-mx-1 w-[156px] bg-[#4e616a] pl-[9px]" : "w-[148px] pl-[5px]")
      }
    >
      {icon}
      {label}
    </button>
  );
}

function Wing() {
  return (
    <svg width="24" height="24" viewBox="0 0 24 24" className="shrink-0" aria-hidden="true">
      <rect x="1.500" y="1" width="21" height="22" rx="4" fill="#0a84fb" />
      <path d="M7 4.500c2 2.500 9 4 9.500 7 .2 1.500-.8 2.500-1.700 4h2l-5 5 .8-3.500h-1.800l1-2.500c-2.500-.5-3.500-2-3.800-3.500 1 .6 2 .8 2.800.8C8.500 10.500 7 8 7 4.500z" fill="#fff" />
    </svg>
  );
}

function Taskbar() {
  return (
    <footer className="flex h-[39px] shrink-0 items-center bg-linear-to-r from-[#20333d] via-[#1c2d3a] to-[#152040]">
      <div className="flex h-full min-w-0 flex-1 gap-[9px] overflow-hidden">
        <button className="flex h-full w-[108px] shrink-0 items-center border-b-2 border-[#78b1dd] text-xs text-white">
          <span className="flex w-[17px] justify-end overflow-hidden whitespace-nowrap"><span>微信</span></span>
        </button>
        <TaskItem label="微信" icon={
          <svg width="24" height="24" viewBox="0 0 24 24" className="shrink-0" aria-hidden="true">
            <ellipse cx="9.500" cy="9.500" rx="9" ry="8.500" fill="#3fc35b" /><path d="M3 15l-.5 4 4-2z" fill="#3fc35b" />
            <circle cx="6.500" cy="7" r="1.200" fill="#1e5a2d" /><circle cx="12" cy="7" r="1.200" fill="#1e5a2d" />
            <ellipse cx="17" cy="15.500" rx="7" ry="6.500" fill="#e9e9e9" /><path d="M20 20l2.500 3-4-1z" fill="#e9e9e9" />
            <circle cx="14.700" cy="14" r="1" fill="#777" /><circle cx="19.200" cy="14" r="1" fill="#777" />
          </svg>
        } />
        <TaskItem label="钉钉" icon={<Wing />} />
        <TaskItem label="百知巴巴" active icon={<Wing />} />
        <TaskItem label="ocam" icon={
          <svg width="24" height="24" viewBox="0 0 24 24" className="shrink-0" aria-hidden="true">
            <rect x="1" y="3" width="21" height="19" rx="1" fill="#f3f1ef" /><circle cx="8.500" cy="14" r="4.300" fill="#5f7fa8" /><circle cx="9" cy="14" r="3.300" fill="#e0703a" />
            <rect x="16.500" y="8" width="3" height="11" fill="#e0703a" /><circle cx="13" cy="8.500" r="1.200" fill="#e0703a" />
          </svg>
        } />
        <TaskItem label="直播伴侣" icon={
          <svg width="24" height="24" viewBox="0 0 24 24" className="shrink-0" aria-hidden="true">
            <rect width="24" height="24" rx="3" fill="#f0143c" /><ellipse cx="12" cy="12.500" rx="7" ry="5.200" fill="none" stroke="#fff" strokeWidth="3.600" />
          </svg>
        } />
        <TaskItem label="钉钉管理员培训.p..." icon={
          <svg width="24" height="24" viewBox="0 0 24 24" className="shrink-0" aria-hidden="true">
            <path d="M0 4h7.500l.8 2H4.200l3.600 9L12 5h4l-2 4.500 2.300 5.800L20 6h-7l.8-2H24l-6.800 16.500h-2L12 13l-3 7.500H7z" fill="#e3512b" />
          </svg>
        } />
        <TaskItem label="oCam" icon={
          <svg width="24" height="24" viewBox="0 0 24 24" className="shrink-0" aria-hidden="true">
            <path d="M4 3h12v17H7l-3 2z" fill="#f8e08a" /><path d="M4 3l4 2.500V22l-4-1.500z" fill="#fdf2c0" /><path d="M12 12h4v8h-4z" fill="#e9c04f" />
          </svg>
        } />
        <TaskItem label="傲软投屏" icon={
          <svg width="24" height="24" viewBox="0 0 24 24" className="shrink-0" fill="none" aria-hidden="true">
            <rect width="24" height="24" rx="4" fill="#28b5f5" /><path d="M3.500 17 8 8.500l4.500 8.500M7 17h4M12 8.500h2L20 17M12.500 11l3 6" stroke="#fff" strokeWidth="1.900" strokeLinejoin="round" />
          </svg>
        } />
        <TaskItem label="企业存储 - 360极..." icon={
          <svg width="24" height="24" viewBox="0 0 24 24" className="shrink-0" aria-hidden="true">
            <circle cx="12" cy="12" r="12" fill="#a34be0" />
            <path d="M12 12C8 8 9 2 13 0a12 12 0 0 1 9 6c-4-2-8 0-10 6z" fill="#e646c8" />
            <path d="M12 12c2-6 6-8 10-6a12 12 0 0 1 1 10c-2-4-6-6-11-4z" fill="#f04a3a" />
            <path d="M12 12c5-2 9 0 11 4a12 12 0 0 1-9 8c2-4 2-8-2-12z" fill="#f5d21e" />
            <path d="M12 12c4 4 4 8 2 12a12 12 0 0 1-11-4c5 1 8-2 9-8z" fill="#8fd62c" />
            <path d="M12 12c-1 6-4 9-9 8A12 12 0 0 1 1 9c2 4 6 6 11 3z" fill="#26b86a" />
            <path d="M12 12C7 15 3 13 1 9a12 12 0 0 1 12-9c-4 2-5 8-1 12z" fill="#5c7df2" />
            <circle cx="12" cy="12" r="2.200" fill="#fff" />
          </svg>
        } />
      </div>
      <div className="flex h-full shrink-0 items-center text-white">
        <Icon d={P.up} size={13} w={2.200} />
        <Icon d={P.monitor} size={17} className="ml-2" />
        <VolumeX size={17} strokeWidth={1.500} className="ml-[7px]" />
        <span className="ml-2 text-base">A</span>
        <svg width="18" height="18" viewBox="0 0 18 18" className="ml-[19px]" aria-hidden="true">
          <path d="M2 3 15 1l2 13-13 3z" fill="#ee4f26" />
          <path d="M13 5.500c-3-1.500-7-.5-6.500 1.500S12.500 9 12.500 11s-4 2.500-7 1" stroke="#fff" strokeWidth="2.300" fill="none" />
        </svg>
        <div className="ml-4 mr-[5px] pb-1 text-right text-xs leading-[17px]">
          <p>17:56 周四</p>
          <p className="pr-1">2023/8/3</p>
        </div>
      </div>
    </footer>
  );
}

export default function App() {
  return (
    <div className={"flex h-screen w-full flex-col overflow-hidden " + FONT}>
      <div className="relative min-h-0 flex-1 overflow-hidden">
        <Browser />
        <DingTalk />
        <DocWindow />
      </div>
      <Taskbar />
    </div>
  );
}
